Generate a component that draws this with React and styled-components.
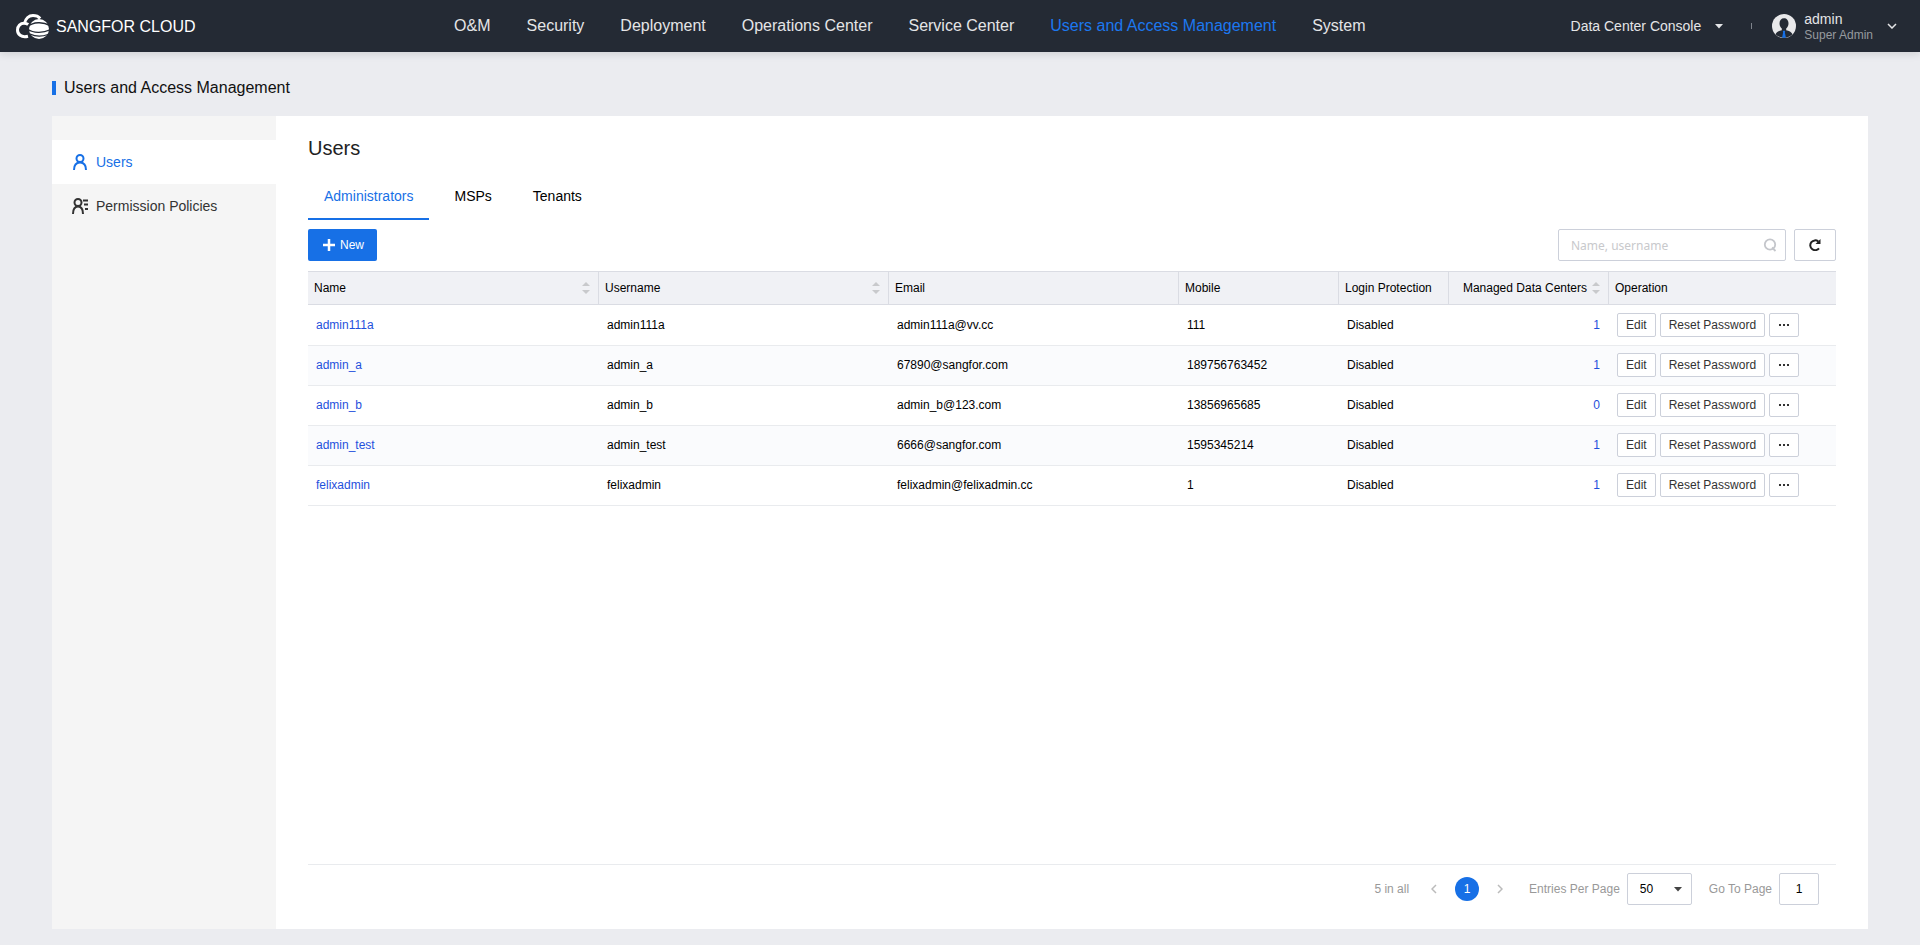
import React, { useState } from 'react'
import styled, { createGlobalStyle } from 'styled-components'

const navItems = [
  'O&M',
  'Security',
  'Deployment',
  'Operations Center',
  'Service Center',
  'Users and Access Management',
  'System',
]

const tabs = ['Administrators', 'MSPs', 'Tenants']

const columns = [
  { label: 'Name', width: 291, sortable: true },
  { label: 'Username', width: 290, sortable: true },
  { label: 'Email', width: 290 },
  { label: 'Mobile', width: 160 },
  { label: 'Login Protection', width: 110 },
  { label: 'Managed Data Centers', width: 160, sortable: true, right: true },
  { label: 'Operation', width: 227 },
]

const users = [
  { name: 'admin111a', email: 'admin111a@vv.cc', mobile: '111', centers: 1 },
  { name: 'admin_a', email: '67890@sangfor.com', mobile: '189756763452', centers: 1 },
  { name: 'admin_b', email: 'admin_b@123.com', mobile: '13856965685', centers: 0 },
  { name: 'admin_test', email: '6666@sangfor.com', mobile: '1595345214', centers: 1 },
  { name: 'felixadmin', email: 'felixadmin@felixadmin.cc', mobile: '1', centers: 1 },
]

const LogoIcon = () => (
  <svg width="34" height="26" viewBox="0 0 34 26" fill="none" aria-hidden="true">
    <path d="M12 22.200C5 24 1.500 20 1.500 16c0-4 3-6.800 6.500-6.800 1.800 0 3 .4 4.200 1.300" stroke="#fff" strokeWidth="3" />
    <path d="M8.500 9.500C9.500 4.500 13 1.600 17 1.600c3 0 5.500 1 7.200 2.900" stroke="#fff" strokeWidth="3" />
    <circle cx="23" cy="15" r="10" fill="#fff" />
    <path d="M12 12.500C17 8 27 7.500 34 11.500" stroke="#242a34" strokeWidth="1.500" />
    <path d="M12 15.500c5 3.500 15 3.800 22 .4M14 20c5 2.500 12 2.700 18 .5" stroke="#242a34" strokeWidth="1.300" />
  </svg>
)

const AvatarIcon = () => (
  <svg width="24" height="24" viewBox="0 0 24 24" aria-hidden="true">
    <circle cx="12" cy="12" r="12" fill="#e8e8ea" />
    <path
      d="M12 4.200c2.700 0 4.500 2.100 4.500 5 0 2.300-.9 4.200-2.300 5.300v1.800c2.800.6 5.200 1.700 6.300 4A11.700 11.700 0 0 1 12 23.700a11.700 11.700 0 0 1-8.500-3.400c1.100-2.300 3.500-3.400 6.300-4v-1.800C8.400 13.400 7.500 11.500 7.500 9.200c0-2.900 1.800-5 4.500-5Z"
      fill="#242a34"
    />
    <path d="M10.800 16.700h2.400l-.3 1.800 1 5.300h-3.800l1-5.300Z" fill="#1770e6" />
  </svg>
)

const UserIcon = () => (
  <svg width="16" height="16" viewBox="0 0 16 16" fill="none" stroke="currentColor" strokeWidth="2" aria-hidden="true">
    <circle cx="8" cy="4.500" r="3.500" />
    <path d="M2 16c0-5 2.500-7.500 6-7.500s6 2.500 6 7.500" />
  </svg>
)

const PolicyIcon = () => (
  <svg width="18" height="16" viewBox="0 0 18 16" fill="none" stroke="currentColor" strokeWidth="2" aria-hidden="true">
    <circle cx="6" cy="4.500" r="3.500" />
    <path d="M1 16c0-5 2-7.500 5-7.500s5 2.500 5 7.500M11 2.500h5M12 6.500h4M13 11h3" />
  </svg>
)

const Caret = () => (
  <svg width="8" height="5" viewBox="0 0 8 5" aria-hidden="true">
    <path d="M0 0h8L4 4.500Z" fill="currentColor" />
  </svg>
)

const Chevron = ({ d, width = 6, height = 10 }) => (
  <svg width={width} height={height} viewBox={`0 0 ${width} ${height}`} fill="none" stroke="currentColor" strokeWidth="1.500" aria-hidden="true">
    <path d={d} />
  </svg>
)

const PlusIcon = () => (
  <svg width="12" height="12" viewBox="0 0 12 12" aria-hidden="true">
    <path d="M6 0v12M0 6h12" stroke="#fff" strokeWidth="2.500" />
  </svg>
)

const SortIcon = () => (
  <svg width="8" height="12" viewBox="0 0 8 12" fill="#c8c9cc" aria-hidden="true">
    <path d="M4 0l4 4H0ZM4 12l4-4H0Z" />
  </svg>
)

const SearchIcon = () => (
  <svg width="14" height="14" viewBox="0 0 14 14" fill="none" stroke="#c4c6cb" strokeWidth="1.800" aria-hidden="true">
    <circle cx="7" cy="6.500" r="5.200" />
    <path d="M9 9.500l3.500 3.500" />
  </svg>
)

const RefreshIcon = () => (
  <svg width="12" height="12" viewBox="0 0 12 12" aria-hidden="true">
    <path d="M10 9.300A4.900 4.900 0 1 1 9.300 2.500" fill="none" stroke="#222" strokeWidth="2" />
    <path d="M11.500 0v5h-5Z" fill="#222" />
  </svg>
)

const DotsIcon = () => (
  <svg width="10" height="2" viewBox="0 0 10 2" fill="#333" aria-hidden="true">
    <path d="M0 0h2v2H0ZM4 0h2v2H4ZM8 0h2v2H8Z" />
  </svg>
)

const App = () => {
  const [tab, setTab] = useState('Administrators')

  return (
    <Page>
      <GlobalStyle />
      <Header>
        <Brand href="#">
          <LogoIcon />
          SANGFOR CLOUD
        </Brand>
        <Nav>
          {navItems.map((item) => (
            <NavLink key={item} href="#" $active={item === 'Users and Access Management'}>
              {item}
            </NavLink>
          ))}
        </Nav>
        <Account>
          <ConsoleButton type="button">
            Data Center Console
            <Caret />
          </ConsoleButton>
          <Divider />
          <ProfileButton type="button">
            <AvatarIcon />
            <Profile>
              <span>admin</span>
              <small>Super Admin</small>
            </Profile>
            <Chevron d="M1 1l4 4 4-4" width={10} height={6} />
          </ProfileButton>
        </Account>
      </Header>
      <Main>
        <PageTitle>Users and Access Management</PageTitle>
        <Panel>
          <Sidebar>
            <SideLink href="#" $active>
              <UserIcon />
              Users
            </SideLink>
            <SideLink href="#">
              <PolicyIcon />
              Permission Policies
            </SideLink>
          </Sidebar>
          <Content>
            <h2>Users</h2>
            <Tabs role="tablist">
              {tabs.map((item) => (
                <Tab key={item} type="button" role="tab" aria-selected={item === tab} $active={item === tab} onClick={() => setTab(item)}>
                  {item}
                </Tab>
              ))}
            </Tabs>
            <Toolbar>
              <NewButton type="button">
                <PlusIcon />
                New
              </NewButton>
              <Search>
                <input type="text" placeholder="Name, username" aria-label="Name, username" />
                <SearchIcon />
              </Search>
              <RefreshButton type="button" aria-label="Refresh">
                <RefreshIcon />
              </RefreshButton>
            </Toolbar>
            <UserTable />
            <Pagination />
          </Content>
        </Panel>
      </Main>
    </Page>
  )
}

const UserTable = () => (
  <Table>
    <colgroup>
      {columns.map(({ label, width }) => (
        <Col key={label} $width={width} />
      ))}
    </colgroup>
    <thead>
      <tr>
        {columns.map(({ label, sortable, right }) => (
          <th key={label}>
            <HeadCell $right={right}>
              {label}
              {sortable && <SortIcon />}
            </HeadCell>
          </th>
        ))}
      </tr>
    </thead>
    <tbody>
      {users.map(({ name, email, mobile, centers }) => (
        <tr key={name}>
          <td>
            <TextLink href="#">{name}</TextLink>
          </td>
          <td>{name}</td>
          <td>{email}</td>
          <td>{mobile}</td>
          <td>Disabled</td>
          <td>
            <CountLink href="#">{centers}</CountLink>
          </td>
          <td>
            <Actions>
              <ActionButton type="button">Edit</ActionButton>
              <ActionButton type="button">Reset Password</ActionButton>
              <ActionButton type="button" aria-label="More">
                <DotsIcon />
              </ActionButton>
            </Actions>
          </td>
        </tr>
      ))}
    </tbody>
  </Table>
)

const Pagination = () => (
  <Pager>
    <span>5 in all</span>
    <Pages>
      <PageButton type="button" aria-label="Previous page">
        <Chevron d="M5 1L1 5l4 4" />
      </PageButton>
      <PageButton type="button" $current>
        1
      </PageButton>
      <PageButton type="button" aria-label="Next page">
        <Chevron d="M1 1l4 4-4 4" />
      </PageButton>
    </Pages>
    <PageSize>
      <label htmlFor="page-size">Entries Per Page</label>
      <SelectBox>
        <select id="page-size" defaultValue="50">
          <option>50</option>
          <option>100</option>
        </select>
        <Caret />
      </SelectBox>
    </PageSize>
    <GoTo>
      <label htmlFor="go-to">Go To Page</label>
      <input id="go-to" type="text" defaultValue="1" />
    </GoTo>
  </Pager>
)

const GlobalStyle = createGlobalStyle`
  * {
    box-sizing: border-box;
  }
  body {
    margin: 0;
    background: #ebecf0;
    color: #000;
    font-family: 'Liberation Sans', Arial, sans-serif;
    font-size: 12px;
  }
  button, input, select {
    font: inherit;
    color: inherit;
  }
  button {
    padding: 0;
    border: none;
    background: none;
    cursor: pointer;
  }
  a {
    text-decoration: none;
  }
  svg {
    flex: none;
    display: block;
  }
`

const Page = styled.div`
  min-height: 100vh;
  display: flex;
  flex-direction: column;
`

const Header = styled.header`
  display: flex;
  align-items: center;
  height: 52px;
  padding: 0 23px 0 16px;
  background: #242a34;
  color: #e4e5e7;
  box-shadow: 0 2px 8px rgba(0, 0, 0, 0.12);
`

const Brand = styled.a`
  flex: 9 1 0;
  display: flex;
  align-items: center;
  gap: 6px;
  padding-top: 1px;
  color: #fff;
  font-size: 16px;
  line-height: 20px;
  white-space: nowrap;
`

const Nav = styled.nav`
  display: flex;
`

const NavLink = styled.a`
  padding: 0 18px;
  color: ${({ $active }) => ($active ? '#1c78f0' : '#e4e5e7')};
  font-size: 16px;
  line-height: 50px;
  white-space: nowrap;
`

const Account = styled.div`
  flex: 11 1 0;
  display: flex;
  align-items: center;
  justify-content: flex-end;
  gap: 20px;
  white-space: nowrap;
`

const ConsoleButton = styled.button`
  display: flex;
  align-items: center;
  gap: 14px;
  margin-right: 8px;
  font-size: 14px;
`

const Divider = styled.span`
  width: 1px;
  height: 6px;
  background: #7f848c;
`

const ProfileButton = styled.button`
  display: flex;
  align-items: center;
  gap: 8px;
  text-align: left;
`

const Profile = styled.span`
  display: flex;
  flex-direction: column;
  margin-right: 6px;
  padding-top: 2px;
  font-size: 14px;
  line-height: 16px;
  small {
    color: #969a9f;
    font-size: 12px;
  }
`

const Main = styled.main`
  flex: 1;
  display: flex;
  flex-direction: column;
  padding: 24px 52px 16px;
`

const PageTitle = styled.h1`
  display: flex;
  align-items: center;
  gap: 8px;
  margin: 0 0 16px;
  font-size: 16px;
  font-weight: 400;
  line-height: 24px;
  color: #111;
  &::before {
    content: '';
    width: 4px;
    height: 14px;
    background: #1770e6;
  }
`

const Panel = styled.div`
  flex: 1;
  display: flex;
  background: #fff;
`

const Sidebar = styled.aside`
  flex: none;
  width: 224px;
  padding-top: 24px;
  background: #f5f5f5;
`

const SideLink = styled.a`
  display: grid;
  grid-template-columns: 16px 1fr;
  align-items: center;
  gap: 8px;
  height: 44px;
  padding-left: 20px;
  background: ${({ $active }) => ($active ? '#fff' : 'none')};
  color: ${({ $active }) => ($active ? '#1770e6' : '#333')};
  font-size: 14px;
`

const Content = styled.section`
  flex: 1;
  display: flex;
  flex-direction: column;
  min-width: 0;
  padding: 20px 32px;
  h2 {
    margin: 0;
    font-size: 20px;
    font-weight: 400;
    line-height: 24px;
    color: #222;
  }
`

const Tabs = styled.div`
  display: flex;
  gap: 9px;
  margin: 12px 0 9px;
`

const Tab = styled.button`
  height: 48px;
  padding: 2px 16px 0;
  border-bottom: 2px solid ${({ $active }) => ($active ? '#1770e6' : 'transparent')};
  color: ${({ $active }) => ($active ? '#1770e6' : '#000')};
  font-size: 14px;
`

const Toolbar = styled.div`
  display: flex;
  gap: 8px;
  height: 32px;
  margin-bottom: 10px;
`

const NewButton = styled.button`
  display: flex;
  align-items: center;
  gap: 5px;
  margin-right: auto;
  padding: 0 13px 0 15px;
  border-radius: 2px;
  background: #1770e6;
  color: #fff;
`

const Search = styled.div`
  display: flex;
  align-items: center;
  width: 228px;
  padding: 0 8px 0 12px;
  border: 1px solid #ccd0da;
  border-radius: 2px;
  input {
    flex: 1;
    min-width: 0;
    padding: 0;
    border: none;
    outline: none;
    font-family: 'Noto Sans', 'Open Sans', sans-serif;
  }
  input::placeholder {
    color: #c8c9cc;
  }
`

const RefreshButton = styled.button`
  display: grid;
  place-items: center;
  width: 42px;
  border: 1px solid #ccd0da;
  border-radius: 2px;
`

const Table = styled.table`
  width: 100%;
  table-layout: fixed;
  border-spacing: 0;
  th {
    height: 34px;
    padding: 0 8px 0 6px;
    border: solid #dadce3;
    border-width: 1px 1px 1px 0;
    background: #f0f1f5;
    font-weight: 400;
  }
  th:last-child {
    border-right: none;
  }
  td {
    height: 40px;
    padding: 0 8px 1px;
    border-bottom: 1px solid #e9ebee;
  }
  tbody tr:first-child td {
    height: 41px;
    padding-top: 1px;
  }
  tbody tr:nth-child(even) {
    background: #fafbfd;
  }
`

const Col = styled.col`
  width: ${({ $width }) => $width}px;
`

const HeadCell = styled.div`
  display: flex;
  align-items: center;
  justify-content: ${({ $right }) => ($right ? 'flex-end' : 'space-between')};
  gap: 5px;
  white-space: nowrap;
`

const TextLink = styled.a`
  color: #1f50dc;
`

const CountLink = styled(TextLink)`
  display: block;
  padding-right: 1px;
  text-align: right;
`

const Actions = styled.div`
  display: flex;
  gap: 4px;
`

const ActionButton = styled.button`
  display: grid;
  place-items: center;
  min-width: 30px;
  height: 24px;
  padding: 0 8px;
  border: 1px solid #ccd0da;
  border-radius: 2px;
  background: #fff;
  color: #333;
  white-space: nowrap;
`

const Pager = styled.footer`
  display: flex;
  align-items: center;
  justify-content: flex-end;
  margin-top: auto;
  padding: 8px 17px 4px 0;
  border-top: 1px solid #e9ebee;
  color: #999;
`

const Pages = styled.div`
  display: flex;
  align-items: center;
  gap: 9px;
  margin: 0 17px 0 13px;
`

const PageButton = styled.button`
  display: grid;
  place-items: center;
  width: 24px;
  height: 24px;
  border-radius: 50%;
  background: ${({ $current }) => ($current ? '#1770e6' : 'none')};
  color: ${({ $current }) => ($current ? '#fff' : '#bbb')};
`

const PageSize = styled.div`
  display: flex;
  align-items: center;
  gap: 7px;
  margin-right: 17px;
`

const SelectBox = styled.span`
  display: grid;
  align-items: center;
  width: 65px;
  height: 32px;
  border: 1px solid #ccd0da;
  border-radius: 2px;
  color: #000;
  select {
    grid-area: 1 / 1;
    height: 30px;
    padding: 0 12px;
    border: none;
    outline: none;
    appearance: none;
    background: none;
  }
  svg {
    grid-area: 1 / 1;
    justify-self: end;
    margin-right: 9px;
    color: #444;
    pointer-events: none;
  }
`

const GoTo = styled.div`
  display: flex;
  align-items: center;
  gap: 7px;
  input {
    width: 40px;
    height: 32px;
    padding: 0;
    border: 1px solid #ccd0da;
    border-radius: 2px;
    color: #000;
    text-align: center;
  }
`

export default App
